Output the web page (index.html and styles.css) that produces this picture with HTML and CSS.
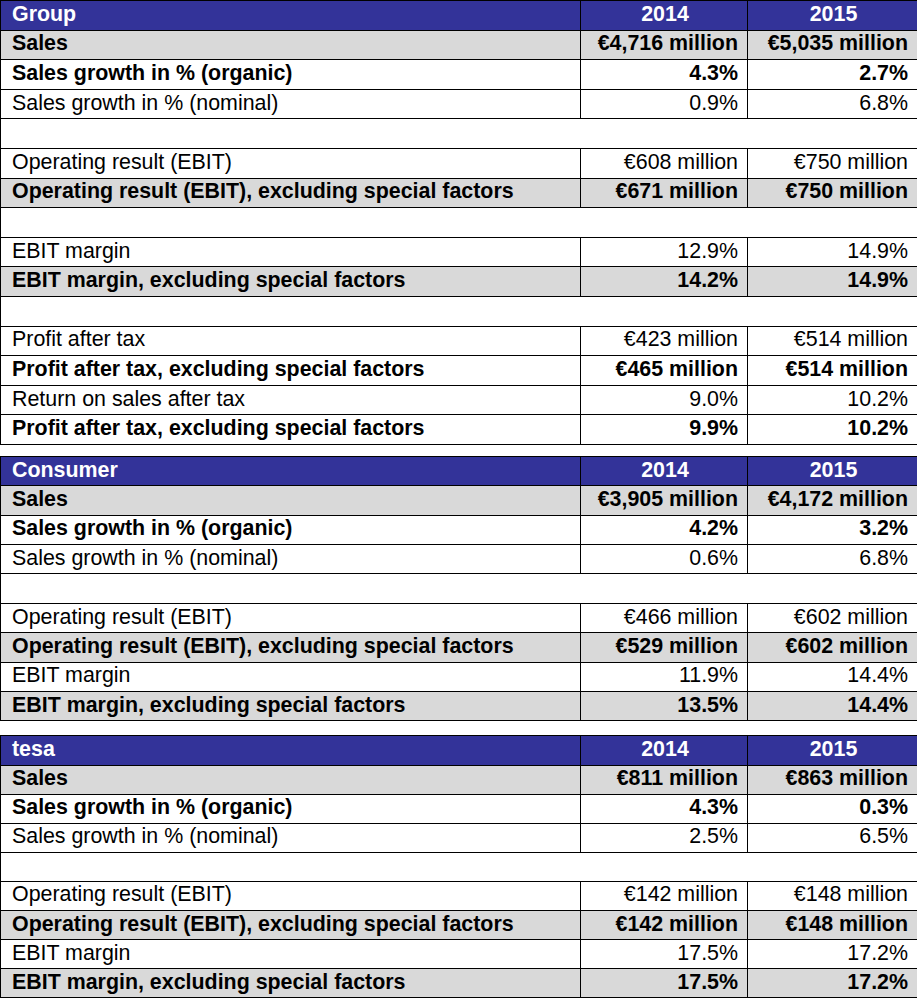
FILE: index.html
```html
<!DOCTYPE html>
<html>
<head>
<meta charset="utf-8">
<link rel="stylesheet" href="styles.css">
</head>
<body>
<div class="page">
  <table class="kpi t1">
    <colgroup><col class="c-label"><col class="c-year"><col class="c-year2"></colgroup>
    <tr class="head"><td>Group</td><td class="ctr">2014</td><td class="ctr">2015</td></tr>
    <tr class="shade bold"><td>Sales</td><td>€4,716 million</td><td>€5,035 million</td></tr>
    <tr class="bold"><td>Sales growth in % (organic)</td><td>4.3%</td><td>2.7%</td></tr>
    <tr><td>Sales growth in % (nominal)</td><td>0.9%</td><td>6.8%</td></tr>
    <tr class="blank"><td colspan="3"></td></tr>
    <tr><td>Operating result (EBIT)</td><td>€608 million</td><td>€750 million</td></tr>
    <tr class="shade bold"><td>Operating result (EBIT), excluding special factors</td><td>€671 million</td><td>€750 million</td></tr>
    <tr class="blank"><td colspan="3"></td></tr>
    <tr><td>EBIT margin</td><td>12.9%</td><td>14.9%</td></tr>
    <tr class="shade bold"><td>EBIT margin, excluding special factors</td><td>14.2%</td><td>14.9%</td></tr>
    <tr class="blank"><td colspan="3"></td></tr>
    <tr><td>Profit after tax</td><td>€423 million</td><td>€514 million</td></tr>
    <tr class="bold"><td>Profit after tax, excluding special factors</td><td>€465 million</td><td>€514 million</td></tr>
    <tr><td>Return on sales after tax</td><td>9.0%</td><td>10.2%</td></tr>
    <tr class="bold"><td>Profit after tax, excluding special factors</td><td>9.9%</td><td>10.2%</td></tr>
  </table>

  <table class="kpi t2">
    <colgroup><col class="c-label"><col class="c-year"><col class="c-year2"></colgroup>
    <tr class="head"><td>Consumer</td><td class="ctr">2014</td><td class="ctr">2015</td></tr>
    <tr class="shade bold"><td>Sales</td><td>€3,905 million</td><td>€4,172 million</td></tr>
    <tr class="bold"><td>Sales growth in % (organic)</td><td>4.2%</td><td>3.2%</td></tr>
    <tr><td>Sales growth in % (nominal)</td><td>0.6%</td><td>6.8%</td></tr>
    <tr class="blank"><td colspan="3"></td></tr>
    <tr><td>Operating result (EBIT)</td><td>€466 million</td><td>€602 million</td></tr>
    <tr class="shade bold"><td>Operating result (EBIT), excluding special factors</td><td>€529 million</td><td>€602 million</td></tr>
    <tr><td>EBIT margin</td><td>11.9%</td><td>14.4%</td></tr>
    <tr class="shade bold"><td>EBIT margin, excluding special factors</td><td>13.5%</td><td>14.4%</td></tr>
  </table>

  <table class="kpi t3">
    <colgroup><col class="c-label"><col class="c-year"><col class="c-year2"></colgroup>
    <tr class="head"><td>tesa</td><td class="ctr">2014</td><td class="ctr">2015</td></tr>
    <tr class="shade bold"><td>Sales</td><td>€811 million</td><td>€863 million</td></tr>
    <tr class="bold"><td>Sales growth in % (organic)</td><td>4.3%</td><td>0.3%</td></tr>
    <tr><td>Sales growth in % (nominal)</td><td>2.5%</td><td>6.5%</td></tr>
    <tr class="blank"><td colspan="3"></td></tr>
    <tr><td>Operating result (EBIT)</td><td>€142 million</td><td>€148 million</td></tr>
    <tr class="shade bold"><td>Operating result (EBIT), excluding special factors</td><td>€142 million</td><td>€148 million</td></tr>
    <tr><td>EBIT margin</td><td>17.5%</td><td>17.2%</td></tr>
    <tr class="shade bold"><td>EBIT margin, excluding special factors</td><td>17.5%</td><td>17.2%</td></tr>
  </table>
</div>
</body>
</html>
```

FILE: styles.css
```css
html, body {
  margin: 0;
  padding: 0;
  background: #ffffff;
}

.page {
  display: flex;
  flex-direction: column;
  gap: 11px;
  width: 917px;
}

.kpi {
  width: 917px;
  border-collapse: collapse;
  table-layout: fixed;
  font-family: "Liberation Sans", Arial, sans-serif;
  font-size: 21.4px;
  color: #000000;
}

.c-label { width: 580px; }
.c-year { width: 167px; }
.c-year2 { width: 170px; }

.kpi td {
  border: 1px solid #000000;
  padding: 0 9px 3px 11px;
  line-height: 24px;
  white-space: nowrap;
  text-align: right;
  vertical-align: middle;
}

.kpi td:first-child {
  text-align: left;
}

.kpi td.ctr {
  text-align: center;
}

.t1 tr { height: 29.6px; }
.t2 tr { height: 29.4px; }
.t3 tr { height: 29.1px; }

.t3 {
  margin-top: 3px;
}

.head td {
  background: #333399;
  color: #ffffff;
  font-weight: bold;
}

.shade td {
  background: #d9d9d9;
}

.bold td {
  font-weight: bold;
}
```
